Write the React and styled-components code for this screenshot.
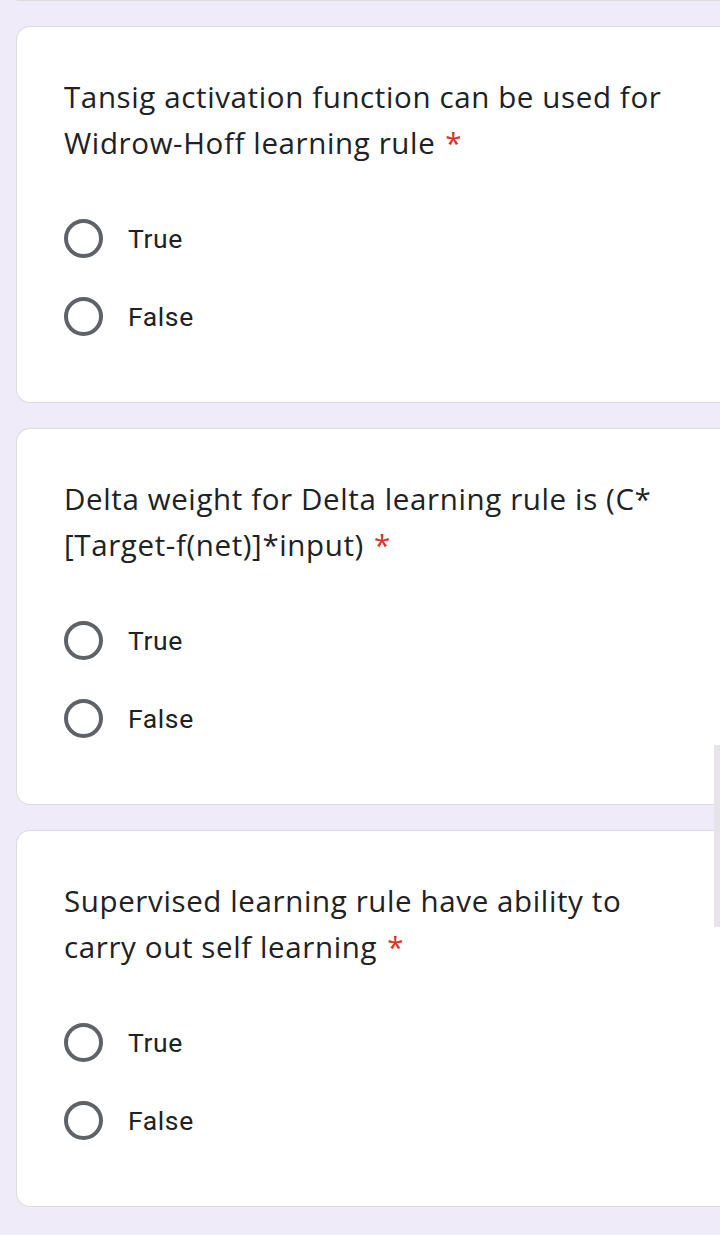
import React from "react";
import styled, { createGlobalStyle } from "styled-components";

const Global = createGlobalStyle`
  html, body { margin: 0; padding: 0; }
  body {
    background: #f0ebf8;
    font-family: Roboto, "Noto Sans", Arial, sans-serif;
    overflow: hidden;
    width: 720px;
    height: 1235px;
  }
`;

const Page = styled.div`
  position: relative;
  display: flex;
  flex-direction: column;
  gap: 25px;
  padding-left: 16px;
  width: 720px;
  box-sizing: border-box;
  overflow: hidden;
  height: 1235px;
`;

const PrevCardEdge = styled.div`
  height: 1px;
  margin-right: -30px;
  background: #ffffff;
  border-bottom: 1px solid #dadce0;
  border-radius: 0 0 0 14px;
  margin-top: -1px;
`;

const Card = styled.section`
  background: #ffffff;
  border: 1px solid #dadce0;
  border-right: none;
  border-radius: 14px 0 0 14px;
  margin-right: -30px;
  padding: 47px 0 47px 47px;
  display: flex;
  flex-direction: column;
  gap: 33px;
`;

const Title = styled.div`
  font-family: "Open Sans", Roboto, Arial, sans-serif;
  font-size: 29.5px;
  line-height: 46px;
  color: #202124;
  letter-spacing: 0.62px;
  max-width: 616px;
`;

const Required = styled.span`
  color: #d93025;
  padding-left: 10px;
  white-space: nowrap;
`;

const Options = styled.div`
  display: flex;
  flex-direction: column;
`;

const Option = styled.label`
  display: flex;
  align-items: center;
  height: 78px;
  gap: 25px;
  cursor: pointer;
`;

const Radio = styled.span`
  width: 39px;
  height: 39px;
  box-sizing: border-box;
  border: 4px solid #5f6368;
  border-radius: 50%;
  flex: none;
`;

const OptionText = styled.span`
  font-family: Roboto, Arial, sans-serif;
  font-size: 26.5px;
  color: #202124;
  letter-spacing: 0.6px;
`;

const Scrollbar = styled.div`
  position: absolute;
  right: 0;
  top: 745px;
  width: 6px;
  height: 182px;
  background: #e6e4ea;
`;

const questions = [
  "Tansig activation function can be used for Widrow-Hoff learning rule",
  "Delta weight for Delta learning rule is (C* [Target-f(net)]*input)",
  "Supervised learning rule have ability to carry out self learning",
];

export default function App() {
  return (
    <>
      <Global />
      <Page>
        <PrevCardEdge />
        {questions.map((q, i) => (
          <Card key={i}>
            <Title>
              {q}
              <Required>*</Required>
            </Title>
            <Options>
              {["True", "False"].map((o) => (
                <Option key={o}>
                  <Radio />
                  <OptionText>{o}</OptionText>
                </Option>
              ))}
            </Options>
          </Card>
        ))}
        <Scrollbar />
      </Page>
    </>
  );
}
